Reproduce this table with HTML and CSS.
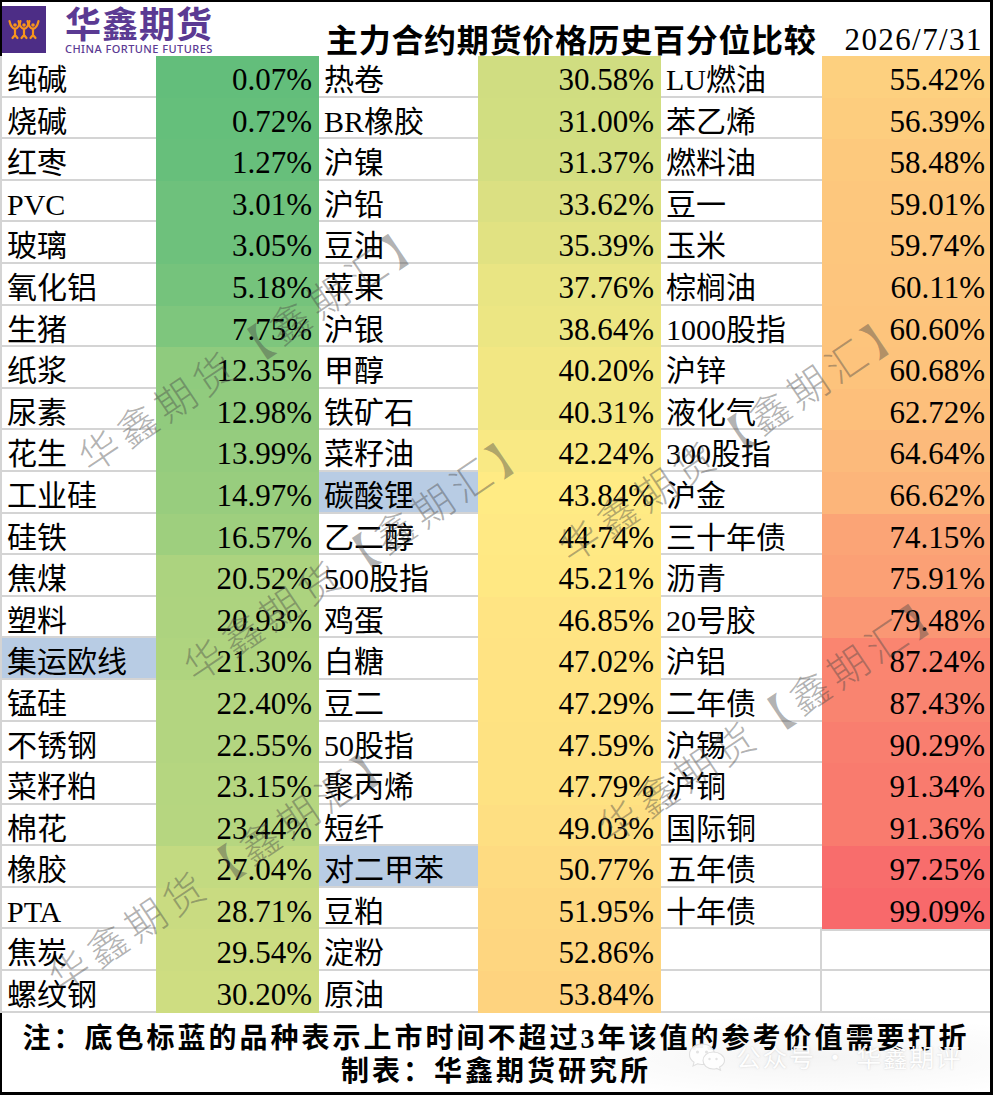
FILE: index.html
```html
<!DOCTYPE html>
<html lang="zh-CN">
<head>
<meta charset="utf-8">
<title>主力合约期货价格历史百分位比较</title>
<link rel="stylesheet" href="styles.css">
</head>
<body>
<div class="sheet">
  <header class="head">
    <div class="brand">
      <div class="brand-mark">
        <svg width="44" height="47" viewBox="0 0 44 47">
          <rect width="44" height="47" fill="#4d2d86"/>
          <g fill="none" stroke="#f7941d" stroke-width="2.2" stroke-linecap="round" stroke-linejoin="round">
            <path d="M7.5 15 Q9 22 13 23 Q17 22 18.5 15"/>
            <path d="M13 22.5 L13 29 M13 29 L10.5 32 M13 29 L15.5 32"/>
            <path d="M16.5 15 Q18 22 22 23 Q26 22 27.5 15"/>
            <path d="M22 22.5 L22 29 M22 29 L19.5 32 M22 29 L24.5 32"/>
            <path d="M25.5 15 Q27 22 31 23 Q35 22 36.5 15"/>
            <path d="M31 22.5 L31 29 M31 29 L28.5 32 M31 29 L33.5 32"/>
          </g>
          <g fill="#f7941d">
            <circle cx="13" cy="19" r="1.8"/>
            <circle cx="22" cy="19" r="1.8"/>
            <circle cx="31" cy="19" r="1.8"/>
          </g>
        </svg>
      </div>
      <div class="brand-text">
        <div class="brand-cn">华鑫期货</div>
        <div class="brand-en">CHINA FORTUNE FUTURES</div>
      </div>
    </div>
    <h1 class="title">主力合约期货价格历史百分位比较</h1>
    <div class="date">2026/7/31</div>
  </header>

  <div class="grid">
    <div class="n">纯碱</div><div class="v" style="background:#63BE7B">0.07%</div><div class="n">热卷</div><div class="v" style="background:#D0DD81">30.58%</div><div class="n">LU燃油</div><div class="v" style="background:#FDD07F">55.42%</div>
    <div class="n">烧碱</div><div class="v" style="background:#65BF7B">0.72%</div><div class="n">BR橡胶</div><div class="v" style="background:#D1DE81">31.00%</div><div class="n">苯乙烯</div><div class="v" style="background:#FDCD7E">56.39%</div>
    <div class="n">红枣</div><div class="v" style="background:#67BF7B">1.27%</div><div class="n">沪镍</div><div class="v" style="background:#D3DE81">31.37%</div><div class="n">燃料油</div><div class="v" style="background:#FDC97D">58.48%</div>
    <div class="n">PVC</div><div class="v" style="background:#6EC17C">3.01%</div><div class="n">沪铅</div><div class="v" style="background:#DBE082">33.62%</div><div class="n">豆一</div><div class="v" style="background:#FDC77D">59.01%</div>
    <div class="n">玻璃</div><div class="v" style="background:#6EC17C">3.05%</div><div class="n">豆油</div><div class="v" style="background:#E1E282">35.39%</div><div class="n">玉米</div><div class="v" style="background:#FDC67D">59.74%</div>
    <div class="n">氧化铝</div><div class="v" style="background:#75C37C">5.18%</div><div class="n">苹果</div><div class="v" style="background:#E9E583">37.76%</div><div class="n">棕榈油</div><div class="v" style="background:#FDC57D">60.11%</div>
    <div class="n">生猪</div><div class="v" style="background:#7EC67D">7.75%</div><div class="n">沪银</div><div class="v" style="background:#ECE683">38.64%</div><div class="n">1000股指</div><div class="v" style="background:#FDC47C">60.60%</div>
    <div class="n">纸浆</div><div class="v" style="background:#8FCB7E">12.35%</div><div class="n">甲醇</div><div class="v" style="background:#F2E783">40.20%</div><div class="n">沪锌</div><div class="v" style="background:#FDC37C">60.68%</div>
    <div class="n">尿素</div><div class="v" style="background:#91CB7E">12.98%</div><div class="n">铁矿石</div><div class="v" style="background:#F2E783">40.31%</div><div class="n">液化气</div><div class="v" style="background:#FDBF7B">62.72%</div>
    <div class="n">花生</div><div class="v" style="background:#95CC7E">13.99%</div><div class="n">菜籽油</div><div class="v" style="background:#F9E984">42.24%</div><div class="n">300股指</div><div class="v" style="background:#FCBA7B">64.64%</div>
    <div class="n">工业硅</div><div class="v" style="background:#98CD7E">14.97%</div><div class="n hl">碳酸锂</div><div class="v" style="background:#FFEB84">43.84%</div><div class="n">沪金</div><div class="v" style="background:#FCB57A">66.62%</div>
    <div class="n">硅铁</div><div class="v" style="background:#9ECF7E">16.57%</div><div class="n">乙二醇</div><div class="v" style="background:#FFE984">44.74%</div><div class="n">三十年债</div><div class="v" style="background:#FBA476">74.15%</div>
    <div class="n">焦煤</div><div class="v" style="background:#ACD37F">20.52%</div><div class="n">500股指</div><div class="v" style="background:#FFE883">45.21%</div><div class="n">沥青</div><div class="v" style="background:#FBA075">75.91%</div>
    <div class="n">塑料</div><div class="v" style="background:#ADD37F">20.93%</div><div class="n">鸡蛋</div><div class="v" style="background:#FFE483">46.85%</div><div class="n">20号胶</div><div class="v" style="background:#FA9774">79.48%</div>
    <div class="n hl">集运欧线</div><div class="v" style="background:#AFD47F">21.30%</div><div class="n">白糖</div><div class="v" style="background:#FFE383">47.02%</div><div class="n">沪铝</div><div class="v" style="background:#FA8570">87.24%</div>
    <div class="n">锰硅</div><div class="v" style="background:#B3D580">22.40%</div><div class="n">豆二</div><div class="v" style="background:#FFE382">47.29%</div><div class="n">二年债</div><div class="v" style="background:#F98470">87.43%</div>
    <div class="n">不锈钢</div><div class="v" style="background:#B3D580">22.55%</div><div class="n">50股指</div><div class="v" style="background:#FEE282">47.59%</div><div class="n">沪锡</div><div class="v" style="background:#F97E6F">90.29%</div>
    <div class="n">菜籽粕</div><div class="v" style="background:#B5D680">23.15%</div><div class="n">聚丙烯</div><div class="v" style="background:#FEE282">47.79%</div><div class="n">沪铜</div><div class="v" style="background:#F97B6E">91.34%</div>
    <div class="n">棉花</div><div class="v" style="background:#B6D680">23.44%</div><div class="n">短纤</div><div class="v" style="background:#FEDF82">49.03%</div><div class="n">国际铜</div><div class="v" style="background:#F97B6E">91.36%</div>
    <div class="n">橡胶</div><div class="v" style="background:#C3DA81">27.04%</div><div class="n hl">对二甲苯</div><div class="v" style="background:#FEDB81">50.77%</div><div class="n">五年债</div><div class="v" style="background:#F86D6C">97.25%</div>
    <div class="n">PTA</div><div class="v" style="background:#C9DB81">28.71%</div><div class="n">豆粕</div><div class="v" style="background:#FED880">51.95%</div><div class="n">十年债</div><div class="v" style="background:#F8696B">99.09%</div>
    <div class="n">焦炭</div><div class="v" style="background:#CCDC81">29.54%</div><div class="n">淀粉</div><div class="v" style="background:#FED680">52.86%</div><div class="n blank"></div><div class="v blank first"></div>
    <div class="n">螺纹钢</div><div class="v" style="background:#CEDD81">30.20%</div><div class="n">原油</div><div class="v" style="background:#FED37F">53.84%</div><div class="n blank"></div><div class="v blank"></div>
  </div>

  <footer class="foot">
    <p>注：底色标蓝的品种表示上市时间不超过3年该值的参考价值需要打折</p>
    <p>制表：华鑫期货研究所</p>
    <div class="wechat">
      <svg width="38" height="30" viewBox="0 0 38 30">
        <g fill="#ffffff" stroke="#dedede" stroke-width="1.1">
          <path d="M14 3 C6.5 3 1.5 8 1.5 13.5 C1.5 16.8 3.3 19.5 6 21.3 L5 25 L9.5 22.8 C11 23.3 12.5 23.5 14 23.5 C21.5 23.5 26.5 18.8 26.5 13.5 C26.5 8 21.5 3 14 3 Z"/>
          <path d="M25 11 C19 11 15 15 15 19.5 C15 24 19 28 25 28 C26.3 28 27.5 27.8 28.6 27.4 L32.5 29.2 L31.6 26 C34.6 24.3 36.5 22 36.5 19.5 C36.5 15 31.5 11 25 11 Z"/>
        </g>
        <g fill="#e2e2e2">
          <circle cx="9.5" cy="11" r="1.5"/>
          <circle cx="18.5" cy="11" r="1.5"/>
          <circle cx="21.5" cy="18" r="1.2"/>
          <circle cx="28.5" cy="18" r="1.2"/>
        </g>
      </svg>
      <span>公众号 · 华鑫期评</span>
    </div>
  </footer>

  <div class="wm wm-a">华鑫期货【鑫期汇】</div>
  <div class="wm wm-b">华鑫期货【鑫期汇】</div>
  <div class="wm wm-c">华鑫期货【鑫期汇】</div>
  <div class="wm wm-d">华鑫期货【鑫期汇】</div>
  <div class="wm wm-e">华鑫期货【鑫期汇】</div>
</div>
</body>
</html>
```

FILE: styles.css
```css
* { box-sizing: border-box; }

html, body {
  margin: 0;
  padding: 0;
  background: #ffffff;
}

body {
  font-family: "Liberation Serif", "Noto Sans CJK SC", serif;
  color: #000000;
}

.sheet {
  position: relative;
  width: 993px;
  height: 1095px;
  border-top: 2px solid #000;
  border-right: 3px solid #000;
  border-bottom: 3px solid #000;
  display: flex;
  flex-direction: column;
  overflow: hidden;
  background: #fff;
}

/* ---------- header ---------- */
.head {
  height: 54px;
  flex: none;
  display: flex;
  border-left: 2px solid #000;
}

.brand {
  width: 318px;
  flex: none;
  display: flex;
  align-items: flex-start;
}

.brand-mark {
  width: 44px;
  height: 47px;
  margin-top: 4px;
  flex: none;
}

.brand-mark svg { display: block; }

.brand-text {
  margin-left: 19px;
  margin-top: -0.5px;
  color: #5b3a93;
}

.brand-cn {
  font-family: "Noto Sans CJK SC", sans-serif;
  font-weight: 700;
  font-size: 36px;
  line-height: 40px;
  letter-spacing: 1px;
  white-space: nowrap;
}

.brand-en {
  font-family: "Noto Sans", sans-serif;
  font-weight: 500;
  font-size: 11px;
  line-height: 12px;
  margin-top: 1px;
  letter-spacing: 0.45px;
  white-space: nowrap;
}

.title {
  margin: 0 0 2px 6px;
  align-self: flex-end;
  font-family: "Noto Sans CJK SC", sans-serif;
  font-weight: 700;
  font-size: 32px;
  line-height: 32px;
  letter-spacing: 0.7px;
  white-space: nowrap;
}

.date {
  margin: 0 0 0.5px 28px;
  align-self: flex-end;
  font-size: 31px;
  line-height: 32px;
  letter-spacing: 1.4px;
  white-space: nowrap;
}

/* ---------- table ---------- */
.grid {
  flex: none;
  display: grid;
  grid-template-columns: 154px 163px 159px 183px 161px 168px;
  grid-auto-rows: 41.6px;
  border-left: 2px solid #d4d4d4;
}

.n, .v {
  border-bottom: 2px solid #d4d4d4;
  padding-top: 6px;
  line-height: 36px;
  white-space: nowrap;
  overflow: hidden;
}

.n {
  font-size: 30px;
  padding-left: 5px;
  background: #fff;
}

.n.hl { background: #b8cce4; }

.v {
  font-size: 31px;
  text-align: right;
  padding-right: 7px;
  border-bottom-color: transparent;
}

.v:nth-child(6n) { padding-right: 5px; }

.n.blank { border-right: 2px solid #d4d4d4; }

.v.blank {
  background: #fff;
  border-bottom-color: #d4d4d4;
}

.v.blank.first { border-top: 2px solid #d4d4d4; }

/* ---------- footer ---------- */
.foot {
  flex: 1;
  position: relative;
  border-left: 2px solid #000;
  padding-top: 9px;
  text-align: center;
  font-weight: 700;
  font-size: 28px;
  line-height: 33px;
  letter-spacing: 3px;
}

.foot::before {
  content: "";
  position: absolute;
  right: 0;
  bottom: 0;
  width: 460px;
  height: 78px;
  background: radial-gradient(ellipse at 62% 55%, rgba(0,0,0,0.045), rgba(0,0,0,0) 70%);
  pointer-events: none;
}

.foot p {
  margin: 0;
  position: relative;
}

.wechat {
  position: absolute;
  left: 686px;
  top: 28px;
  display: flex;
  align-items: center;
  gap: 10px;
  color: #ffffff;
  font-family: "Noto Sans CJK SC", sans-serif;
  font-weight: 400;
  font-size: 25px;
  line-height: 30px;
  letter-spacing: 1.5px;
  text-shadow: 0 0 1.5px rgba(0,0,0,0.14), 0 0 4px rgba(0,0,0,0.06);
  white-space: nowrap;
  opacity: 0.95;
}

.wechat svg { display: block; }

/* ---------- watermarks ---------- */
.wm {
  position: absolute;
  font-family: "Noto Sans CJK SC", sans-serif;
  font-weight: 300;
  font-size: 40px;
  line-height: 1;
  letter-spacing: 6px;
  color: rgba(70,70,70,0.42);
  white-space: nowrap;
  transform: translate(-50%, -50%) rotate(-34deg);
  pointer-events: none;
}

.wm-a { left: 253px; top: 343px; }
.wm-b { left: 733px; top: 433px; }
.wm-c { left: 358px; top: 552px; }
.wm-d { left: 223px; top: 863px; }
.wm-e { left: 773px; top: 713px; }
```
